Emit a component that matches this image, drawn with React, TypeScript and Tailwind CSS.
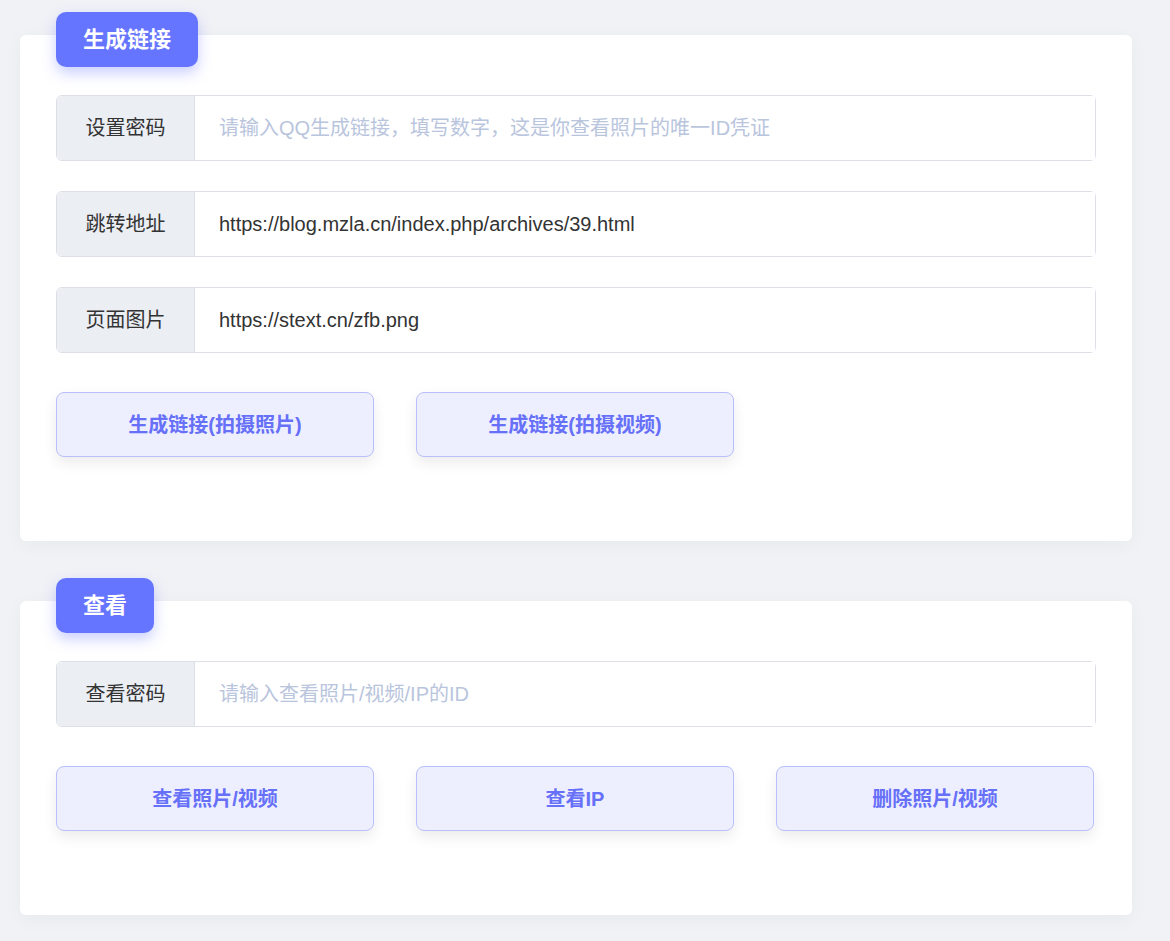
const font = { fontFamily: '"Liberation Sans", "Noto Sans CJK SC", sans-serif' }

function Field({ label, value, placeholder }: { label: string; value?: string; placeholder?: string }) {
  return (
    <div className="flex h-[66px] rounded-md border border-[#dcdfe8]">
      <div className="flex w-[138px] shrink-0 items-center justify-center rounded-l-md border-r border-[#dcdfe8] bg-[#ebeef3] text-[20px] text-[#333]">
        {label}
      </div>
      <div className="flex flex-1 items-center bg-white px-6 text-[20px]">
        {value ? <span className="text-[#333]">{value}</span> : <span className="text-[#b9c5dd]">{placeholder}</span>}
      </div>
    </div>
  )
}

function Btn({ children }: { children: string }) {
  return (
    <button className="flex h-[65px] w-[318px] items-center justify-center rounded-lg border border-[#b9bffb] bg-[#eeeffe] text-[20px] font-bold text-[#6670f8] shadow-[0_6px_14px_rgba(0,0,0,0.08)]">
      {children}
    </button>
  )
}

function Card({ title, children }: { title: string; children: React.ReactNode }) {
  return (
    <div className="relative rounded-md bg-white px-9 pt-[60px] pb-[84px] shadow-[0_4px_20px_rgba(0,0,0,0.04)]">
      <div className="absolute left-9 top-[-23px] flex h-[55px] items-center rounded-[10px] bg-[#6675ff] px-[27px] text-[22px] font-bold text-white shadow-[0_6px_14px_rgba(102,117,255,0.35)]">
        {title}
      </div>
      {children}
    </div>
  )
}

export default function App() {
  return (
    <div style={font} className="min-h-[941px] bg-[#f1f2f6] px-5 pt-[35px] pb-[26px]">
      <div className="w-[1112px]">
        <Card title="生成链接">
          <div className="flex flex-col gap-[30px]">
            <Field label="设置密码" placeholder="请输入QQ生成链接，填写数字，这是你查看照片的唯一ID凭证" />
            <Field label="跳转地址" value="https://blog.mzla.cn/index.php/archives/39.html" />
            <Field label="页面图片" value="https://stext.cn/zfb.png" />
          </div>
          <div className="mt-[39px] flex gap-[42px]">
            <Btn>生成链接(拍摄照片)</Btn>
            <Btn>生成链接(拍摄视频)</Btn>
          </div>
        </Card>
        <div className="h-[60px]" />
        <Card title="查看">
          <Field label="查看密码" placeholder="请输入查看照片/视频/IP的ID" />
          <div className="mt-[39px] flex gap-[42px]">
            <Btn>查看照片/视频</Btn>
            <Btn>查看IP</Btn>
            <Btn>删除照片/视频</Btn>
          </div>
        </Card>
      </div>
    </div>
  )
}
